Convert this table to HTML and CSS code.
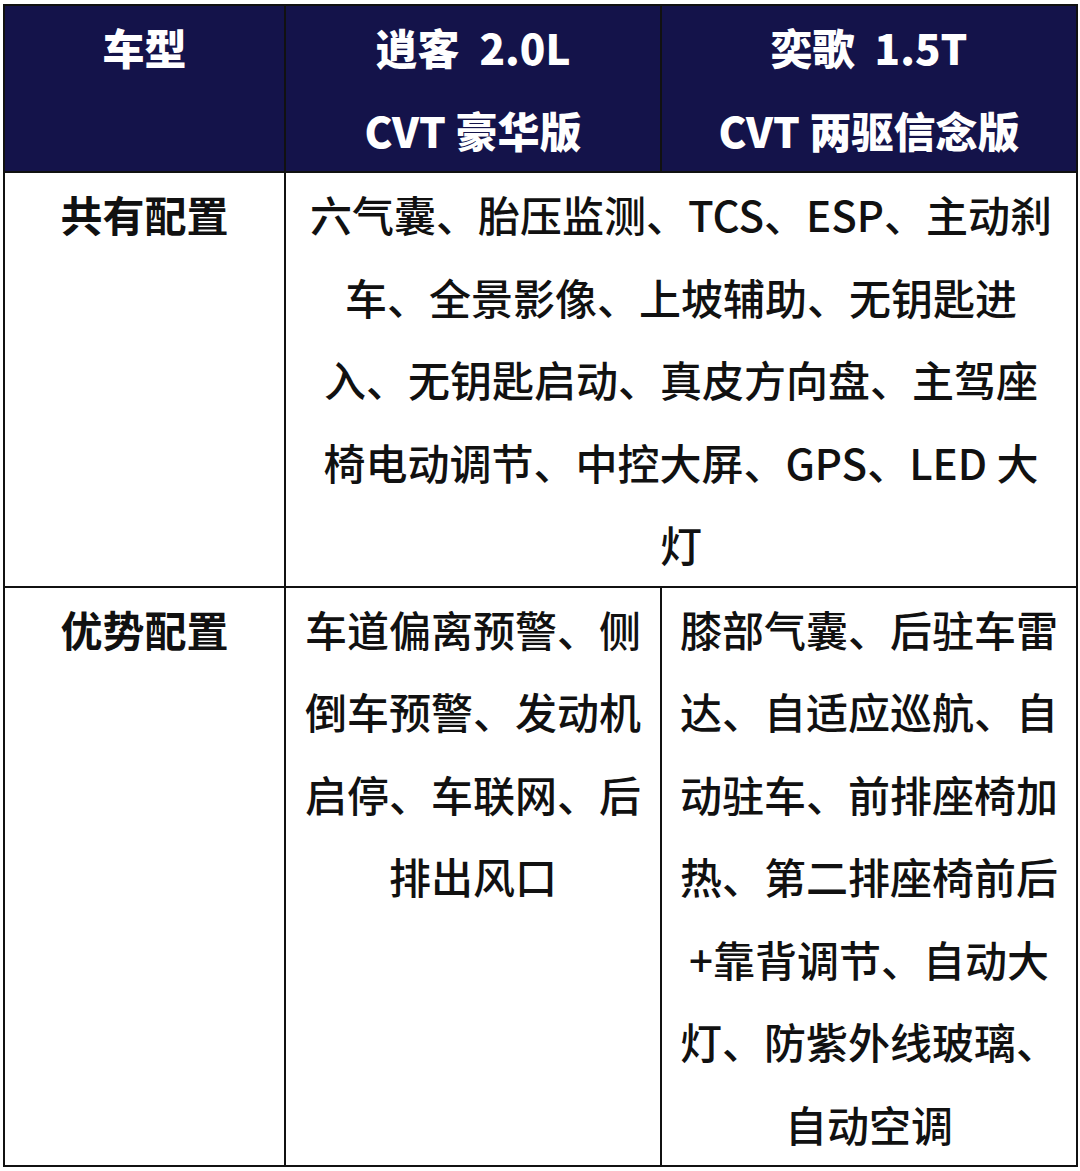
FILE: index.html
```html
<!DOCTYPE html>
<html lang="zh-CN">
<head>
<meta charset="utf-8">
<title>配置对比</title>
<link rel="stylesheet" href="styles.css">
</head>
<body>
<table class="compare">
  <colgroup>
    <col class="c-label">
    <col class="c-a">
    <col class="c-b">
  </colgroup>
  <thead>
    <tr class="head-row">
      <th>车型</th>
      <th>逍客<span class="gap"></span>2.0L<br>CVT 豪华版</th>
      <th>奕歌<span class="gap"></span>1.5T<br>CVT 两驱信念版</th>
    </tr>
  </thead>
  <tbody>
    <tr>
      <td class="label">共有配置</td>
      <td class="wide" colspan="2">六气囊、胎压监测、TCS、ESP、主动刹<br>车、全景影像、上坡辅助、无钥匙进<br>入、无钥匙启动、真皮方向盘、主驾座<br>椅电动调节、中控大屏、GPS、LED 大<br>灯</td>
    </tr>
    <tr>
      <td class="label">优势配置</td>
      <td class="cell-a">车道偏离预警、侧倒车预警、发动机启停、车联网、后排出风口</td>
      <td class="cell-b">膝部气囊、后驻车雷达、自适应巡航、自动驻车、前排座椅加热、第二排座椅前后+靠背调节、自动大灯、防紫外线玻璃、自动空调</td>
    </tr>
  </tbody>
</table>
</body>
</html>
```

FILE: styles.css
```css
html, body {
  margin: 0;
  padding: 0;
  background: #ffffff;
}

body {
  padding: 4px 0 0 3px;
  font-family: "Noto Sans CJK SC", "Noto Sans", sans-serif;
  color: #111111;
}

.compare {
  border-collapse: collapse;
  table-layout: fixed;
  width: 1073px;
  font-size: 42px;
  line-height: 82.5px;
}

.c-label { width: 281px; }
.c-a { width: 376px; }
.c-b { width: 416px; }

.compare th,
.compare td {
  border: 2px solid #111111;
  padding: 0;
  vertical-align: top;
  text-align: center;
}

.head-row th {
  background: #14134a;
  color: #ffffff;
  font-weight: 900;
}

.gap {
  display: inline-block;
  width: 20px;
}

.label {
  font-weight: 700;
}

.wide {
  padding: 0 16px;
  font-weight: 500;
  white-space: nowrap;
}

.cell-a {
  padding: 0 18px;
  font-weight: 500;
}

.cell-b {
  padding: 0 16px;
  font-weight: 500;
}
```
